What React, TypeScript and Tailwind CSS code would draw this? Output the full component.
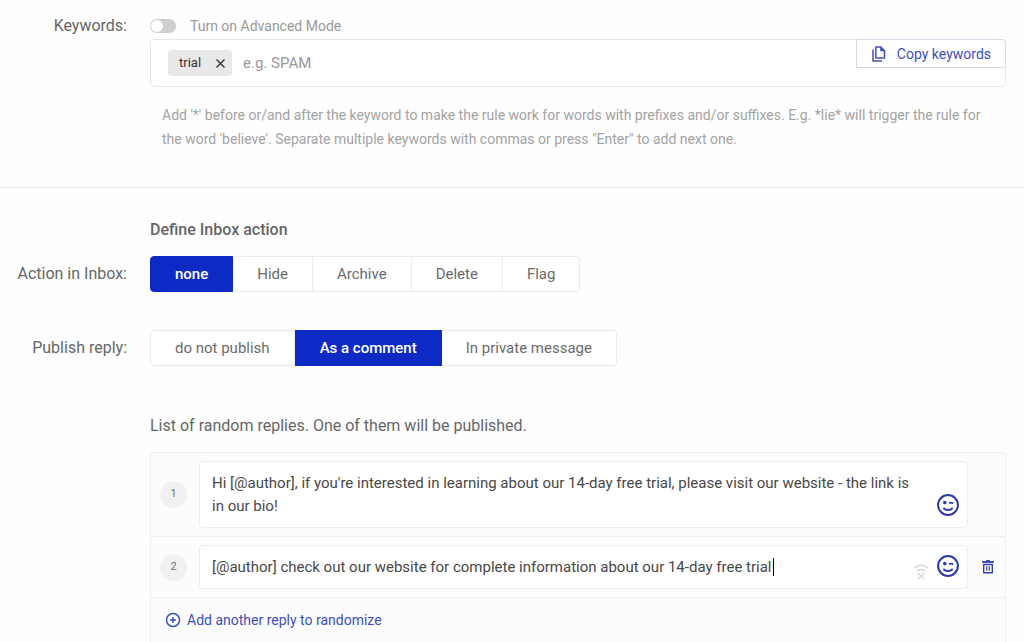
import { useState } from 'react';
import type { ReactNode } from 'react';

interface SegmentedProps {
  label: string;
  options: string[];
  value: string;
  onChange: (value: string) => void;
}

function Segmented({ label, options, value, onChange }: SegmentedProps) {
  return (
    <div role="group" aria-label={label} className="flex text-[15px]">
      {options.map((option) => (
        <button
          key={option}
          type="button"
          aria-pressed={option === value}
          onClick={() => onChange(option)}
          className={
            option === value
              ? 'h-9 border border-[#0d2bc4] bg-[#0d2bc4] px-6 font-medium text-white first:rounded-l-sm last:rounded-r-sm'
              : 'h-9 border-y border-r border-[#ebebeb] bg-white px-6 text-[#6b6b6b] first:rounded-l-sm first:border-l last:rounded-r-sm'
          }
        >
          {option}
        </button>
      ))}
    </div>
  );
}

interface FieldRowProps {
  label?: string;
  htmlFor?: string;
  children: ReactNode;
}

function FieldRow({ label, htmlFor, children }: FieldRowProps) {
  return (
    <div className="flex gap-[23px] pr-[18px]">
      <div className="w-[127px] shrink-0 text-right leading-9">
        {label && <label htmlFor={htmlFor}>{label}</label>}
      </div>
      <div className="min-w-0 grow">{children}</div>
    </div>
  );
}

function CopyIcon() {
  return (
    <svg width="14" height="16" viewBox="0 0 14 16" fill="none" stroke="currentColor" strokeWidth="1.500" aria-hidden="true">
      <path d="M3.800 1h5L12.500 4.800V12H3.800z" strokeLinejoin="round" />
      <path d="M8.500 1v4h4z" fill="currentColor" strokeWidth="0.500" />
      <path d="M1 3.500V15h9" strokeLinejoin="round" />
    </svg>
  );
}

function WinkIcon() {
  return (
    <svg width="22" height="22" viewBox="0 0 22 22" fill="none" stroke="currentColor" strokeWidth="2" aria-hidden="true">
      <circle cx="11" cy="11" r="9.900" />
      <circle cx="7.800" cy="8.600" r="1.800" fill="currentColor" stroke="none" />
      <path d="M12 9.200c1-.6 3-.6 4.300 0" strokeWidth="1.700" />
      <path d="M6.300 13.800c2.400 3 7 3 9.400 0" strokeWidth="1.900" />
    </svg>
  );
}

function TrashIcon() {
  return (
    <svg width="12" height="14" viewBox="0 0 12 14" fill="none" stroke="currentColor" aria-hidden="true">
      <path d="M0 2h12" strokeWidth="1.800" />
      <path d="M4 .8h4" strokeWidth="1.400" />
      <path d="M1.700 4.500v8.200h8.600V4.500z" strokeWidth="1.400" />
      <path d="M4.700 6.200v4.500M7.300 6.200v4.500" strokeWidth="1.200" />
    </svg>
  );
}

function OfflineIcon() {
  return (
    <svg width="14" height="16" viewBox="0 0 14 16" fill="none" stroke="#d3d3d3" strokeWidth="1.400" aria-hidden="true">
      <path d="M.5 4c3.600-3.600 9.400-3.600 13 0M3 7c2-2 6-2 8 0" />
      <path d="M4 9l6 6M10 9l-6 6" />
    </svg>
  );
}

interface ReplyRowProps {
  index: number;
  text: string;
  rows: number;
  active?: boolean;
  onChange: (text: string) => void;
}

function ReplyRow({ index, text, rows, active, onChange }: ReplyRowProps) {
  return (
    <div className="flex items-center border-b border-[#efefef] px-[9px] py-2">
      <label
        htmlFor={`reply-${index}`}
        className="mr-3 flex size-[27px] shrink-0 items-center justify-center rounded-full bg-[#f1f1f1] text-[11px] text-[#777]"
      >
        {index}
      </label>
      <div className="relative flex grow rounded border border-[#ededed] bg-white">
        <textarea
          id={`reply-${index}`}
          rows={rows}
          value={text}
          onChange={(e) => onChange(e.target.value)}
          className="mt-[10px] mr-11 mb-[9px] ml-3 grow resize-none overflow-hidden text-[15px] leading-[23px] text-[#484848] outline-none"
        />
        {active && <span className="absolute top-3 left-[573px] h-[18px] w-px bg-black" />}
        {active && (
          <span className="absolute right-[39px] bottom-2">
            <OfflineIcon />
          </span>
        )}
        <button type="button" aria-label="Insert emoji" className="absolute right-2 bottom-[11px] text-[#2c39a8]">
          <WinkIcon />
        </button>
      </div>
      <div className="flex w-7 shrink-0 justify-end">
        {active && (
          <button type="button" aria-label="Delete reply" className="mr-[2px] text-[#3440b0]">
            <TrashIcon />
          </button>
        )}
      </div>
    </div>
  );
}

export default function App() {
  const [advanced, setAdvanced] = useState(false);
  const [keywords, setKeywords] = useState(['trial']);
  const [action, setAction] = useState('none');
  const [publish, setPublish] = useState('As a comment');
  const [replies, setReplies] = useState([
    "Hi [@author], if you're interested in learning about our 14-day free trial, please visit our website - the link is in our bio!",
    '[@author] check out our website for complete information about our 14-day free trial',
  ]);

  return (
    <main className="h-screen overflow-hidden bg-[#fefefe] font-[Roboto,sans-serif] text-base text-[#666]">
      <section className="border-b border-[#ececec] pt-2 pb-9">
        <FieldRow label="Keywords:" htmlFor="keywords">
          <label className="flex h-[31px] items-center gap-[14px] pt-1 text-sm text-[#999]">
            <input
              type="checkbox"
              role="switch"
              checked={advanced}
              onChange={(e) => setAdvanced(e.target.checked)}
              className="h-[14px] w-[26px] appearance-none rounded-full bg-[#cfcfcf] before:m-px before:block before:size-3 before:rounded-full before:bg-white checked:bg-[#0d2bc4] checked:before:ml-[13px]"
            />
            Turn on Advanced Mode
          </label>
          <div className="flex h-12 items-start rounded border border-[#e8e8ec] bg-white pl-[17px]">
            {keywords.map((keyword) => (
              <span
                key={keyword}
                className="mt-[10px] mr-[11px] flex h-[26px] items-center gap-[15px] rounded-sm bg-[#e8e8e8] pr-[7px] pl-[11px] text-[13px] text-[#333]"
              >
                {keyword}
                <button
                  type="button"
                  aria-label={`Remove ${keyword}`}
                  onClick={() => setKeywords(keywords.filter((k) => k !== keyword))}
                >
                  <svg width="9" height="9" viewBox="0 0 9 9" stroke="currentColor" strokeWidth="1.400" aria-hidden="true">
                    <path d="M.5.5l8 8M8.500.5l-8 8" />
                  </svg>
                </button>
              </span>
            ))}
            <input
              id="keywords"
              type="text"
              placeholder="e.g. SPAM"
              className="h-[46px] min-w-0 grow text-[15px] outline-none placeholder:text-[#999]"
            />
            <button
              type="button"
              className="-mt-px -mr-px flex h-[29px] items-center gap-[11px] rounded-tr border border-[#d6d9e6] bg-white pr-[14px] pl-[15px] text-sm text-[#3f4fb8]"
            >
              <CopyIcon />
              Copy keywords
            </button>
          </div>
          <p className="mt-4 px-3 text-sm leading-6 text-[#a3a3a3]">
            Add '*' before or/and after the keyword to make the rule work for words with prefixes and/or suffixes. E.g.
            *lie* will trigger the rule for the word 'believe'. Separate multiple keywords with commas or press "Enter"
            to add next one.
          </p>
        </FieldRow>
      </section>

      <section className="pt-6">
        <FieldRow>
          <h2 className="leading-9 font-medium">Define Inbox action</h2>
        </FieldRow>
        <div className="mt-2">
          <FieldRow label="Action in Inbox:">
            <Segmented
              label="Action in Inbox"
              options={['none', 'Hide', 'Archive', 'Delete', 'Flag']}
              value={action}
              onChange={setAction}
            />
          </FieldRow>
        </div>
        <div className="mt-[38px]">
          <FieldRow label="Publish reply:">
            <Segmented
              label="Publish reply"
              options={['do not publish', 'As a comment', 'In private message']}
              value={publish}
              onChange={setPublish}
            />
          </FieldRow>
        </div>
        <div className="mt-12">
          <FieldRow>
            <p className="leading-6">List of random replies. One of them will be published.</p>
            <div className="mt-[14px] rounded border border-[#efefef] bg-[#fcfcfc]">
              {replies.map((reply, i) => (
                <ReplyRow
                  key={i}
                  index={i + 1}
                  text={reply}
                  rows={i === 0 ? 2 : 1}
                  active={i === 1}
                  onChange={(text) => setReplies(replies.map((r, n) => (n === i ? text : r)))}
                />
              ))}
              <button
                type="button"
                onClick={() => setReplies([...replies, ''])}
                className="flex h-14 items-start gap-[6px] px-[14px] pt-3 text-sm text-[#3f4fb8]"
              >
                <svg width="16" height="16" viewBox="0 0 16 16" fill="none" stroke="currentColor" strokeWidth="1.500" className="mt-[2px]" aria-hidden="true">
                  <circle cx="8" cy="8" r="6.500" />
                  <path d="M8 5v6M5 8h6" />
                </svg>
                Add another reply to randomize
              </button>
            </div>
          </FieldRow>
        </div>
      </section>
    </main>
  );
}
